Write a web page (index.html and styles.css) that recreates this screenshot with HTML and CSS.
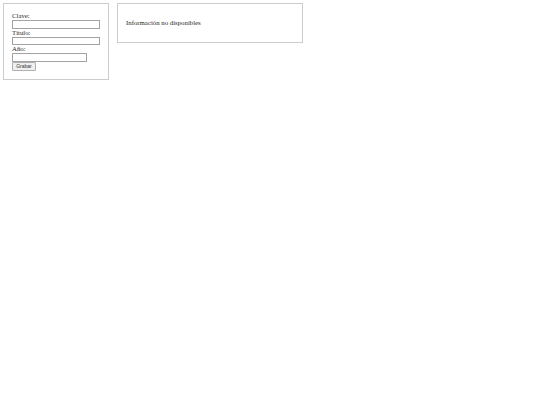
FILE: index.html
```html
<!DOCTYPE html>
<html lang="es">
<head>
<meta charset="utf-8">
<title>Formulario</title>
<link rel="stylesheet" href="styles.css">
</head>
<body>
<div class="page">
  <form class="panel form-panel">
    <label class="field-label" for="clave">Clave:</label>
    <input class="field" id="clave" type="text">
    <label class="field-label" for="titulo">Título:</label>
    <input class="field" id="titulo" type="text">
    <label class="field-label" for="anio">Año:</label>
    <input class="field field-short" id="anio" type="text">
    <button class="btn" type="button">Grabar</button>
  </form>
  <div class="panel info-panel">
    <p class="info-text">Información no disponibles</p>
  </div>
</div>
</body>
</html>
```

FILE: styles.css
```css
html, body {
  margin: 0;
  padding: 0;
  background: #ffffff;
}

body {
  font-family: "Liberation Serif", "Times New Roman", serif;
  font-size: 6.8px;
  line-height: 8px;
  color: #2a2a2a;
}

.page {
  display: flex;
  align-items: flex-start;
  gap: 8px;
  padding: 3px;
}

.panel {
  border: 1px solid #cccccc;
  padding: 8px;
  margin: 0;
}

.form-panel {
  width: 88px;
  display: flex;
  flex-direction: column;
  align-items: flex-start;
}

.field-label {
  display: block;
  height: 8px;
  line-height: 8px;
}

.field {
  box-sizing: border-box;
  display: block;
  width: 88px;
  height: 8.5px;
  margin: 0;
  padding: 0 2px;
  border: 1px solid #a3a3a3;
  border-radius: 0;
  background: #ffffff;
  font-size: 6px;
}

.field-short {
  width: 75px;
}

.btn {
  box-sizing: border-box;
  height: 9px;
  width: 24px;
  margin: 0;
  padding: 0;
  border: 1px solid #b0b0b0;
  border-radius: 1px;
  background: #efefef;
  font-family: "Liberation Sans", Arial, sans-serif;
  font-size: 5px;
  line-height: 7px;
  color: #333333;
}

.info-panel {
  width: 168px;
}

.info-text {
  margin: 7px 0;
  line-height: 8px;
}
```
